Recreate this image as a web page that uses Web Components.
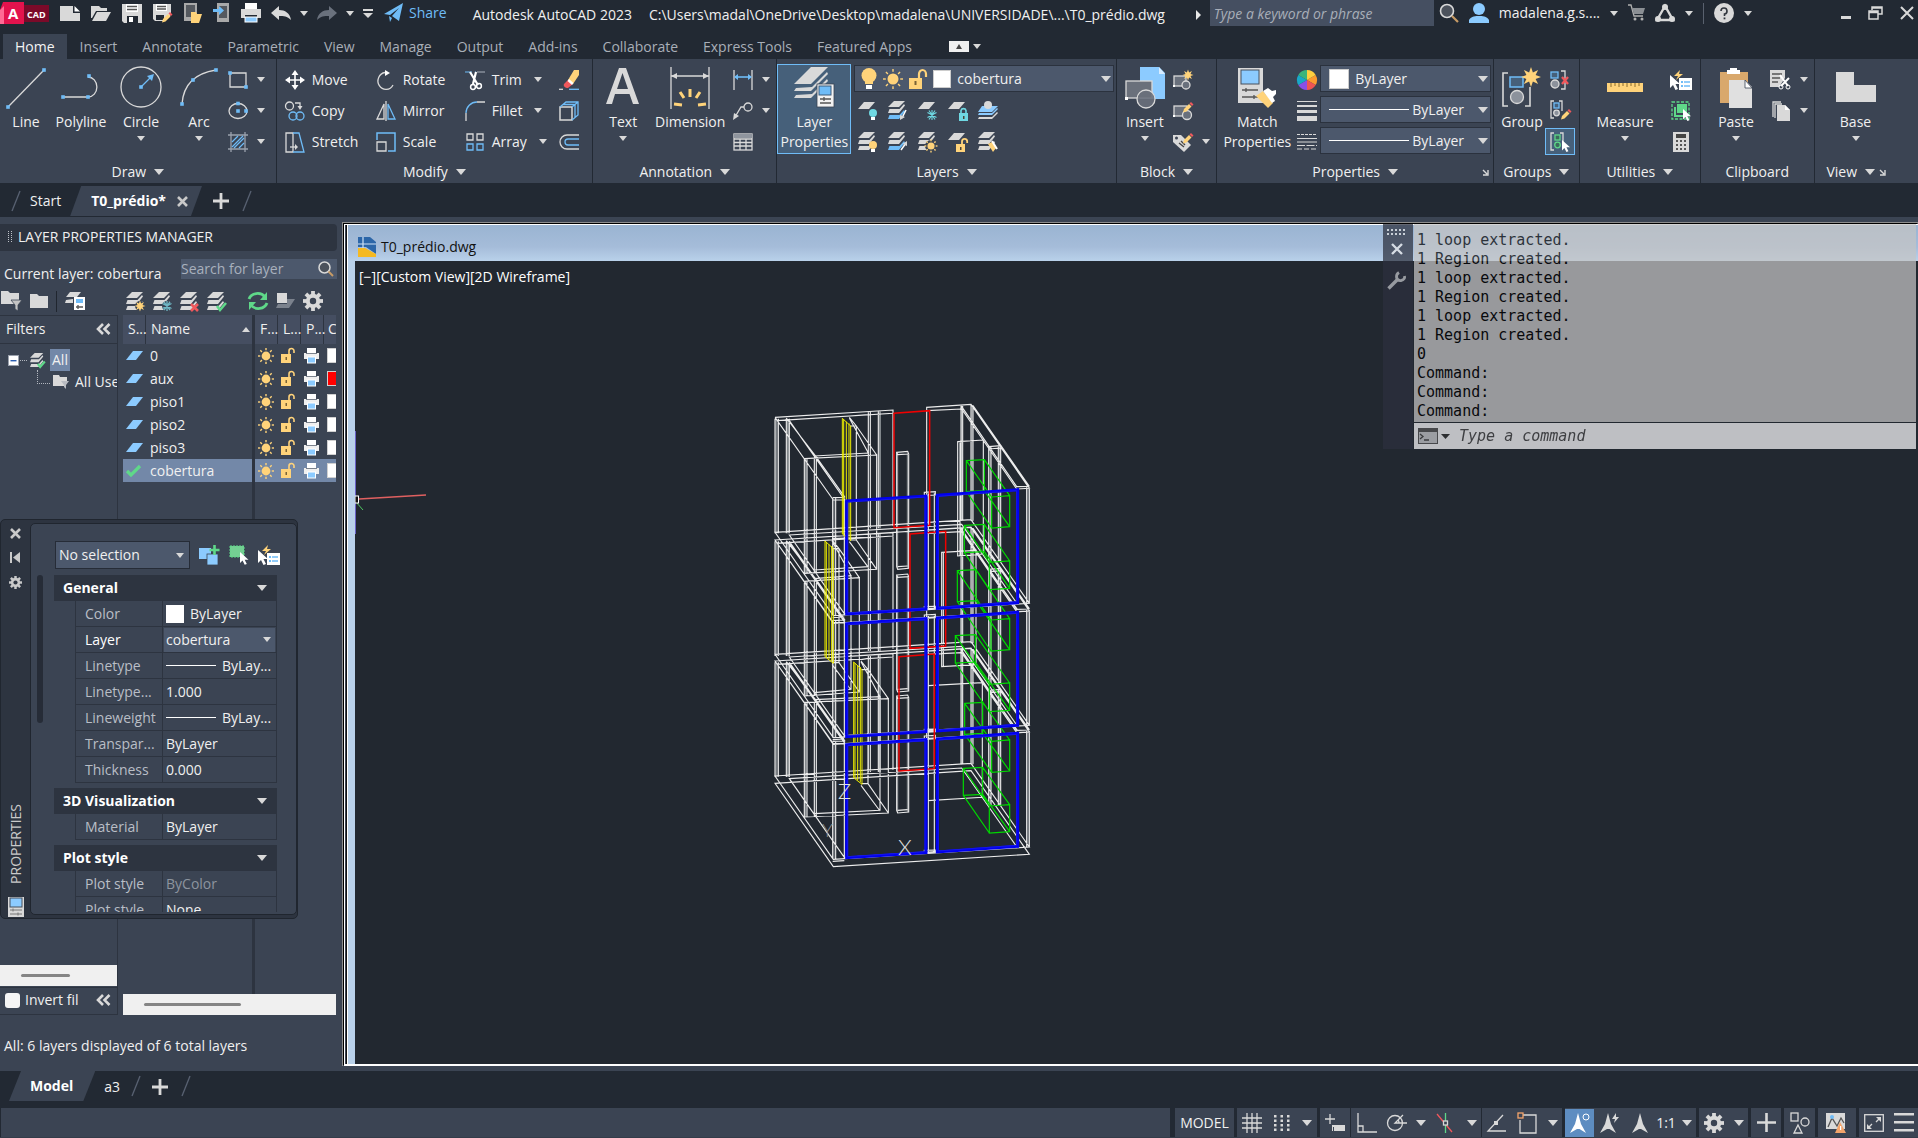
<!DOCTYPE html>
<html lang="en">
<head>
<meta charset="utf-8">
<title>Autodesk AutoCAD 2023</title>
<style>
html,body{margin:0;height:100%;background:#222933;overflow:hidden}
</style>
</head>
<body>
<acad-app></acad-app>
<script>
/* ---------- icon set: name -> [width, height, markup] ---------- */
const W='#d9d9d9',B='#6fbcf7',LB='#8ccbff',Y='#ffd37a',G='#5fd889',R='#f0585c',T='#6fd8e2',D='#3b4453';
const ln=(d,c=W,w=1.3,x='')=>`<path d="${d}" fill="none" stroke="${c}" stroke-width="${w}" ${x}/>`;
const fl=(d,c=W,x='')=>`<path d="${d}" fill="${c}" ${x}/>`;
const rc=(x,y,w,h,c=W,e='')=>`<rect x="${x}" y="${y}" width="${w}" height="${h}" fill="${c}" ${e}/>`;
const ci=(x,y,r,c=W,e='')=>`<circle cx="${x}" cy="${y}" r="${r}" fill="${c}" ${e}/>`;
const st=`stroke="${W}" stroke-width="1.3"`;
const sun=(x,y,r,c=Y)=>{let s=ci(x,y,r*.55,c);for(let i=0;i<8;i++){const a=i*Math.PI/4;s+=ln(`M${x+Math.cos(a)*r*.72} ${y+Math.sin(a)*r*.72}L${x+Math.cos(a)*r} ${y+Math.sin(a)*r}`,c,1.4)}return s};
const star=(x,y,r,c=Y,k=.5)=>{let p='';for(let i=0;i<16;i++){const a=i*Math.PI/8,q=i%2?r*k:r;p+=(i?'L':'M')+(x+Math.sin(a)*q).toFixed(1)+' '+(y-Math.cos(a)*q).toFixed(1)}return fl(p+'z',c)};
const sheet3=(a=W,b=W,c=W)=>fl('M6 0H17L11 6H0z',a)+fl('M1.500 8L0 12H11L17 4.500L16 3L11.500 8z',b)+fl('M1.500 14L0 18H11L17 10.500L16 9L11.500 14z',c);
const cursor=(x,y,s=1)=>`<path transform="translate(${x} ${y}) scale(${s})" d="M0 0V13L3 10L5.500 15L8 14L5.500 9H10z" fill="#fff"/>`;
const pencil=(x,y)=>`<g transform="translate(${x} ${y})">${fl('M1 6L6 1L8.500 3.500L3.500 8.500L0 9.500z',Y)}${fl('M6.500 .500L8 -1L10.500 1.500L9 3z',R)}</g>`;
const gear=(x,y,r,c=W,h=D)=>{let s='';for(let i=0;i<4;i++)s+=`<rect x="${x-r*.19}" y="${y-r}" width="${r*.38}" height="${r*2}" fill="${c}" transform="rotate(${i*45} ${x} ${y})"/>`;return s+ci(x,y,r*.72,c)+ci(x,y,r*.32,h)};
const lock=(x,y,c,open)=>`<g transform="translate(${x} ${y})">${rc(0,5,9,8,c)}${open?ln('M6 5V2.500A2.600 2.600 0 0 1 11.200 2.500V4',c,1.8):ln('M2 5V2.500A2.600 2.600 0 0 1 7 2.500V5',c,1.6)}${rc(4,8,1.5,3,'#4a4436')}</g>`;
const sq=(x,y)=>rc(x-1.8,y-1.8,3.6,3.6,B);
const I={
dn:[8,5,fl('M0 0H8L4 5z')],dns:[10,6,fl('M0 0H10L5 6z')],up:[8,5,fl('M0 5H8L4 0z')],
rt:[6,10,fl('M0 0L5 5L0 10z','#e8e8e8')],
logo:[49,22,fl('M3 0H24V22H4L0 22V8z','#e3134d')+fl('M0 8L4 4V22H0z','#ff6a95')+rc(24,3,25,17,'#7b0a29')],
new:[20,20,fl('M0 3H13V10H20V18H0z')+fl('M14.500 3L20 8.500H14.500z','#fff')],
open:[20,20,fl('M0 3H8L10 5H16V8H5L1 15H0z')+fl('M6 9H20L15 18H1z')],
save:[20,20,fl('M0 1H20V20H2L0 18z')+rc(4,1,12,8,'#fff')+ln('M5 3.500H15M5 6.500H15','#555')+rc(5,13,11,7,'#222933')+rc(7,14,4,5,'#fff')],
saveas:[20,20,fl('M0 1H18V12L10 18H2L0 16z')+rc(3,1,11,7,'#fff')+ln('M4 3.500H13M4 6H13','#555')+rc(3,12,8,5,'#222933')+pencil(9,10)],
mopen:[18,20,fl('M0 0H13V18H0z','#a9a9a9')+rc(2,2,9,12,'#55595f')+fl('M7 9H12L13 11H18L15 20H7z',Y)],
msave:[17,20,rc(4,0,12,19,'#a9a9a9')+rc(6,3,8,12,'#55595f')+fl('M0 6H6V3L11 7.500L6 12V9H0z',B)],
print:[20,20,rc(4,0,12,6,'#fff')+fl('M0 6H20V15H16V12H4V15H0z')+rc(4,14,12,5,LB,'stroke="#fff"')],
undo:[20,14,fl('M0 7L8 0V4C14 4 19 7 20 14C16 10 13 10 8 10V14z')],
redo:[20,14,fl('M20 7L12 0V4C6 4 1 7 0 14C4 10 7 10 12 10V14z','#6a717d')],
qat:[10,9,rc(0,0,10,2)+fl('M0 4H10L5 9z')],
plane:[19,20,fl('M0 11L19 0L15 18L8 13L15 5L6 12z',B)+fl('M5 13L8 15L6 19z',B)],
mag:[20,20,ci(8,8,6.5,'#4c525c',`stroke="${W}" stroke-width="1.600"`)+ln('M13 13L19 19','#c79b66',2.2)],
mags:[16,16,ci(6.5,6.5,5.5,'#4c525c',`stroke="${W}" stroke-width="1.500"`)+ln('M10.500 10.500L15 15','#c79b66',2)],
user:[20,20,ci(10,6,6,LB)+fl('M0 20V17C2 13 7 13 10 13S18 13 20 17V20z',LB)],
cart:[17,18,ln('M0 1H3L6 12H15','#b0b0b0')+fl('M4 4H17L15 10H6z','#8b8f94')+ci(7,15,1.5,'#b0b0b0')+ci(14,15,1.5,'#b0b0b0')],
tri:[20,18,ln('M10 2L2 16H18z',W,2.4)+ci(10,3,3)+ci(3,15,3)+ci(17,15,3)],
help:[20,20,ci(10,10,10)+ln('M7 8A3 3 0 1 1 10.500 11V13','#30353d',1.6)+rc(9.6,14.500,1.8,1.8,'#30353d')],
min:[10,3,rc(0,0,10,3)],
rest:[15,14,ln('M4 4V1H14V8H10M1 5H10V13H1zM4 2H14M1 6.500H10',W,1.5)],
close:[14,14,ln('M1 1L13 13M13 1L1 13',W,2)],
toggle:[20,11,rc(0,0,20,11,'#f0f0f0')+fl('M7 8H13L10 3z','#444')],
line:[40,42,ln('M2 40L38 3')+sq(2,40)+sq(38,3)],
poly:[40,40,ln('M2 30H27A8 9 0 0 0 27 10')+sq(2,30)+sq(27,30)+sq(28,9)],
circle:[42,42,ci(21,20,20,'none',st)+ln('M21 20L30 11',B)+fl('M27 9L34 7L32 14z',B)+sq(21,20)],
arc:[40,40,ln('M3 37Q5 8 37 3')+sq(3,37)+sq(14,13)+sq(37,3)],
rect:[20,18,ln('M2 2H18V16H2z')+sq(2,2)+sq(18,16)],
ell:[20,20,`<ellipse cx="10" cy="10" rx="9" ry="7.500" fill="none" ${st}/>`+sq(10,2.5)+sq(10,10)+sq(18,10)],
hatch:[20,20,ln('M3 0V20M17 0V20M0 3H20M0 17H20','#9aa1ad')+ln('M4 10L10 4M4 15L15 4M6 16L16 6M11 16L16 11',B,1.2)],
move:[20,20,ln('M10 2V18M2 10H18','#fff',1.6)+fl('M10 0L13.500 5H6.500zM10 20L13.500 15H6.500zM0 10L5 6.500V13.500zM20 10L15 6.500V13.500z','#fff')],
copy:[20,20,ci(4.5,5,4,'none',st)+ln('M10 2H15V6')+fl('M12.500 5H17.500L15 9z')+ci(8,15,4,'none',`stroke="${B}" stroke-width="1.300"`)+ci(15,15,4,'none',`stroke="${B}" stroke-width="1.300"`)],
stretch:[20,20,ln('M1 1H8V20H1z')+ln('M8 1H14L19 20H8',B)+ln('M5 15H11')+fl('M10 12L13 15L10 18z')],
rotate:[20,20,ln('M9 2.500A8 8.500 0 1 0 17 15')+fl('M9 0L14 3L9 6z','#fff')],
mirror:[20,20,ln('M1 18L8 3V18z')+ln('M12 3L19 18H12z',B)+ln('M10 0V20')],
scale:[20,20,ln('M1 8V1H19V19H12',B,1.5)+ln('M1 10H10V19H1z')],
trim:[20,20,ln('M0 2H7M10 2H11',B,1.2)+ln('M12 2H20','#9aa1ad',1.2)+ln('M5 2L13 15M11 2L8 14','#fff',2.2)+ci(8,17,2.4,'none','stroke="#fff" stroke-width="1.500"')+ci(14,16,2.4,'none','stroke="#fff" stroke-width="1.500"')],
fillet:[20,20,ln('M1 12A11 11 0 0 1 12 1',B)+ln('M12 1H20M1 20V12')],
array:[18,18,ln('M1 1H7V7H1zM11 1H17V7H11z')+ln('M1 11H7V17H1zM11 11H17V17H11z',B)],
erase:[20,20,fl('M9 10L15 0L20 0V5L14 14z',Y)+fl('M9 10L14 14L9 18C6 18 4 16 5 14z',R)+fl('M8.500 11L13 15L14.500 13L10 9z','#fff')+ln('M0 19.300H4')+ln('M10 19.300H20',B)],
box3:[20,20,ln('M1 6H13V19H1z',W,1.5)+ln('M1 6L7 1H19V14L13 19M13 6L19 1M4 3.500H16V16',B)],
offset:[20,16,ln('M20 1H8A7 7 0 0 0 8 15H20')+ln('M20 5H9A3 3 0 0 0 9 11H20',B)],
bigA:[34,42,fl('M0 37L13 1H20L33 37H27L23.500 27H9L6 37zM11 22H22L16.500 6z')],
dim:[42,42,ln('M2 0V42M40 0V42M2 9H40')+fl('M2 9L8 6V12zM40 9L34 6V12z')+ln('M21 22V30M11 25L15 31M31 25L27 31M5 37L13 38M37 37L29 38',Y,3)],
dims:[20,20,ln('M1 0V20M19 0V20')+ln('M2 7H18',B,1.6)+fl('M1 7L5 4V10zM19 7L15 4V10z',B)],
leader:[20,18,ci(15,5,4,'none',st)+ln('M11 5H8L2 15')+fl('M0 18L1 11L6 14z')],
table:[20,18,rc(1,1,18,16,'none',st)+ln('M1 6H19M1 9.500H19M1 13H19M7 6V17M13 6V17')+rc(1,1,18,4,'#8f959e')],
layers:[40,40,fl('M17 0H34L17 17H0z')+fl('M2 21L0 24H17L34 7L33 5L18 20z')+fl('M2 28L0 31H17L34 14L33 12L18 27z')+rc(23,17,17,23,'#f2f2f2',`stroke="${D}" stroke-width=".800"`)+rc(25,19,12,9,B,'stroke="#3d5a78"')+ln('M26 32H37M26 36H37M30 30V34','#555',1.3)],
bulb:[16,22,ci(8,7.5,7.5,Y)+rc(4,12,8,4,Y)+rc(5,17,6,4,'#fff')],
sun:[20,20,sun(10,10,10)],
unlock:[18,20,rc(0,9,13,11,Y)+ln('M10 9V5A3.500 4 0 0 1 17 5V8',Y,2.2)+rc(5.5,12,2,4,'#7a6335')],
l1:[20,20,fl('M6 1H17L11 8H0z')+ci(15,12,4,T)+rc(13,16,4,3,'#fff')],
l2:[20,20,sheet3(W,W,B)+ln('M18 9L14 17','#fff',1.5)+fl('M12 19L12 14L17 16z')],
l3:[20,20,fl('M6 1H17L11 8H0z')+ln('M14 9V19M9.500 11.500L18.500 16.500M18.500 11.500L9.500 16.500M11 9.500L17 18.500M17 9.500L11 18.500',T,1.1)],
l4:[20,20,fl('M6 1H17L11 8H0z')+lock(11,7,T,0)],
l5:[20,20,fl('M4 5H20L14 11H0z',LB)+fl('M1 12L0 14H14L20 8L19 7L14 12z',LB)+fl('M1 16L0 18H14L20 12L19 11L14 16z')+ci(10,4,4)],
l6:[20,20,sheet3()+ci(15,13,4,Y)+rc(13,17,4,3,'#fff')],
l7:[20,20,sheet3(W,W,B)+ln('M13 18L18 11','#fff',1.5)+fl('M19 9V14L14.500 12z')],
l8:[20,20,sheet3()+ci(13,14,6,D)+sun(13,14,6.5)],
l9:[20,20,fl('M6 1H17L11 8H0z')+lock(8,7,Y,1)],
l10:[20,20,sheet3()+fl('M10 12L14 10L18 16L15 20z',Y)+ln('M14 9L19 17','#fff',2)],
insert:[40,42,fl('M15 0H34L40 6V32H15z',LB)+fl('M34 0V7H40z','#d7ecff')+rc(1,14,26,17,'#6a707b',st)+ci(21,32,9,'#6a707b',`fill-opacity=".900" ${st}`)+rc(0,30,3,3,'#fff')],
b1:[20,20,rc(1,6,12,10,'#69707c',st)+ci(13,15,4,'#69707c',st)+star(15,5,5.5)+rc(0,15,2,2,'#fff')],
b2:[20,20,rc(1,5,13,10,'#69707c',st)+ci(14,14,4.5,'#69707c',st)+pencil(10,2)+rc(0,14,2,2,'#fff')],
b3:[20,20,fl('M0 3L8 3L18 13L11 20L0 10z')+ci(3.5,6,1.5,D)+ln('M6 11L11 15M8 9L12 13','#444')+pencil(10,2)],
match:[40,42,rc(1,1,25,35)+rc(4,3,18,14,LB,'stroke="#48505c"')+ln('M5 23H21M5 30H21M9 21V25M17 28V32','#555')+fl('M19 29L26 24L36 36L31 41z',Y)+fl('M26 24L31 21L35 24L39 23L39 27L36 30L38 34L35 36z','#fff')],
wheel:[20,20,['#fd9b2f','#ef5454','#8a4fe8','#18a8c8','#3bb57b','#ffcf3f'].map((c,i)=>{const a=(i*60-30)*Math.PI/180,b=a+Math.PI/3;return fl(`M10 10L${10+10*Math.cos(a)} ${10+10*Math.sin(a)}A10 10 0 0 1 ${10+10*Math.cos(b)} ${10+10*Math.sin(b)}z`,c)}).join('')],
lw:[20,20,rc(0,0,20,1)+rc(0,4,20,2)+rc(0,9,20,3)+rc(0,15,20,5)],
lt:[20,18,ln('M0 1.500H20',W,1,'stroke-dasharray="3 1"')+ln('M0 5.500H20M0 9H20',W,1)+ln('M0 12.500H20',W,1,'stroke-dasharray="8 1.500"')+ln('M0 16H20',W,1,'stroke-dasharray="5 2"')],
group:[40,40,ln('M6 6H1V39H6',W,1.6)+ln('M23 39H28V20',W,1.6)+rc(8,10,13,10,'#46607a',`stroke="${B}" stroke-width="1.500"`)+ci(15,30,6.5,'#8c929c',st)+star(29,10,10)],
g1:[20,20,rc(1,2,7,6,'#46607a',`stroke="${B}" stroke-width="1.300"`)+ci(5,14,4,'#8c929c',st)+ln('M11 1H15V19H11')+ln('M12 7L18 14M18 7L12 14',R,2.4)],
g2:[20,20,rc(4,2,5,5,'#46607a',`stroke="${B}" stroke-width="1.300"`)+ci(6.5,12,2.8,'#8c929c',st)+ln('M4 0H1V17H4M9 0H12V10')+pencil(11,9)],
g3:[20,20,rc(5,3,5,5,'#3b6b5d',`stroke="${G}" stroke-width="1.300"`)+ci(7.500,13,2.8,'#3b6b5d',`stroke="${G}" stroke-width="1.300"`)+ln('M4 1H1V18H4M10 1H13V10')+cursor(12,8,.8)],
ruler:[36,40,rc(0,16,36,9,Y)+ln('M4 16V20M8 16V19M12 16V20M16 16V19M20 16V20M24 16V19M28 16V20M32 16V19','#8a6d2d',1)],
u1:[22,20,cursor(0,5,1)+fl('M10 0L4 6H8L6 10L13 4H9z',Y)+rc(9,8,13,12,'#fff')+rc(11,11,2,2,B)+rc(11,15,2,2,B)+ln('M14 12H20M14 16H20',B)],
u2:[20,20,ln('M1 1H18V18H1z',G,1.3,'stroke-dasharray="3 1.500"')+rc(6,3,10,9,G)+ln('M4 6V15H12',G,2)+cursor(12,8,.8)],
calc:[16,20,rc(0,0,16,20)+rc(3,2,10,4,'#444')+[3,7,11].map(x=>[8,12,16].map(y=>rc(x,y,2,2,'#555')).join('')).join('')],
paste:[34,42,rc(1,5,28,31,'#d9a86c')+rc(8,3,13,4,'#fff')+rc(11,1,7,4,'#fff')+fl('M10 13H26L33 20V41H10z','#e0e0e0')+fl('M26 13V21H33z','#fff','stroke="#3b4453" stroke-width=".800"')],
cut:[22,20,fl('M0 0H15V8L9 17H0z')+ln('M2 4H12M2 8H10M2 12H8','#555')+ln('M10 5L18 16M19 8L11 16','#fff',2)+ci(11,17,2,'none','stroke="#fff"')+ci(18,17,2,'none','stroke="#fff"')],
cp:[18,20,ln('M1 16V1H9')+ln('M3 17V3H10')+fl('M5 4H13L18 9V20H5z')+fl('M13 4V9H18z','#fff')],
base:[40,40,fl('M0 5H18V18H40V35H0z')],
launch:[7,7,ln('M1 1L5 5M6 1V6H1',W,1.4)],
x:[11,11,ln('M1 1L10 10M10 1L1 10','#c9c9c9',2.6)],
plus:[16,16,ln('M8 0V16M0 8H16',W,2.8)],
slash:[10,20,ln('M9 0L1 20','#596273',1.3)],
grip:[4,11,[0,3].map(x=>[0,2,4,6,8,10].map(y=>rc(x,y,1,1,'#c0c4ca')).join('')).join('')],
ff:[21,20,fl('M0 0H7L9 2H18V9L16 13H0z')+fl('M10 9H21L17 14V20L14 18V14z','#c4c4c4',`stroke="${D}" stroke-width=".800"`)],
fof:[16,14,fl('M0 0H6L7 2H14V7L12 11H0z')+fl('M8 6H16L13 10V14L11 12V10z','#b9bcc2')],
fo:[18,16,fl('M0 1H7L9 3H18V15H0z')],
fs:[20,20,fl('M5 1H16L12 6H1z')+fl('M1 9L0 12H8V8z')+rc(9,6,11,13,'#fff')+rc(11,8,7,4,B)+ln('M11 16H18M13 14V18','#555')],
n1:[19,19,sheet3()+ci(14,14,5,D)+star(14,14,5.5)],
n2:[19,19,sheet3()+ci(14,14,5,D)+ln('M14 9V19M9.500 11.500L18.500 16.500M18.500 11.500L9.500 16.500M11 10L17 18M17 10L11 18','#6fb6c4',1.3)],
n3:[19,19,sheet3()+ln('M11 12L18 19M18 12L11 19',R,2.6)],
n4:[19,19,sheet3()+ln('M10 14L13 18L19 11',G,2.6)],
n4s:[15,15,`<g transform="scale(.78)">${sheet3()+ln('M10 14L13 18L19 11',G,2.8)}</g>`],
refresh:[20,18,ln('M1 7A9 8 0 0 1 17 5M19 11A9 8 0 0 1 3 13',G,2.8)+fl('M19 0V8H12z',G)+fl('M1 18V10H8z',G)],
iso:[19,16,rc(1,0,10,10)+fl('M11 6H19L13 15H0L2 11H11z','#7b828d')],
gear:[20,20,gear(10,10,10)],gears:[13,13,gear(6.5,6.5,6.5,'#c9c9c9','#2d3440')],
chev:[15,12,ln('M7 1L2 6L7 11M13.500 1L8.500 6L13.500 11',W,2.6)],
minus:[11,11,rc(.5,.5,10,10,'#fff','stroke="#9aa1ad"')+rc(2.5,5,6,1.4,'#2a5db0')],
state:[17,9,fl('M7 0H17L10 9H0z',LB)],
check:[15,12,ln('M1 6L5 10L14 1',G,3.2)],
sunr:[16,16,sun(8,8,8)],
unl:[14,15,rc(0,6,10,9,Y)+ln('M8 6V3A2.500 2.500 0 0 1 13 3V5',Y,1.6)+rc(4.500,9,1.5,3,'#7a6335')],
pr:[15,15,rc(3,0,9,5,'#fff')+fl('M0 5H15V11H12V9H3V11H0z','#f0f0f0')+ln('M2 5.500H13','#7b828d',1)+rc(3.5,9,8,6,LB,'stroke="#fff"')],
pin:[11,11,rc(0,0,2,11,'#c9c9c9')+fl('M3 5.500L10 0V11z','#c9c9c9')],
prop:[16,20,rc(0,0,16,20)+rc(2,1,12,9,LB,'stroke="#48505c"')+ln('M2 13H14M2 17H14M5 11.500V14.500M10 15.500V18.500','#777',1)],
p1:[21,20,rc(0,3,12,11,LB)+rc(8,9,11,11,LB,`stroke="${D}" stroke-width=".800"`)+ln('M15.500 0V10M10.500 5H20.500',G,2.6)],
p2:[20,20,rc(1,1,14,11,'#74cf93',`stroke="${G}" stroke-dasharray="2 1"`)+cursor(11,7,.85)],
dwg:[18,20,fl('M0 0H12L18 5V17L8 10H0z','#2c66a8')+ln('M5 0V13M0 7H18','#cfe2f5',1.2)+fl('M0 11H7L18 17V20H0z','#f5b921')],
grid6:[20,6,[0,4,8,12,16].map(x=>rc(x,0,2,2)+rc(x,4,2,2)).join('')],
wrench:[19,19,ln('M1.500 17.500L11 8','#c3c6ca',3.4)+ln('M12 1.500C8 4 9 10 14 9.500C17 9 18 7 17.500 5','#c3c6ca',2.8)],
cx:[12,12,ln('M1 1L11 11M11 1L1 11','#e6e6e6',2.4)],
cmd:[20,16,rc(.5,.5,19,15,'#c9cacc','stroke="#555"')+rc(0,0,20,4,'#555')+ln('M2 6L5 8.500L2 11M6 12H11','#444')],
dk:[9,5,fl('M0 0H9L4.500 5z','#333')],
sgrid:[20,20,ln('M5 0V20M10 0V20M15 0V20M0 5H20M0 10H20M0 15H20',W,1.3)],
ssnap:[16,16,[0,6.5,13].map(x=>[0,4.500,9,13.5].map(y=>rc(x,y,2.5,2.5)).join('')).join('')],
sdyn:[20,18,ln('M5 0V10M0 5H10')+rc(7,11,13,6)+rc(8,13,1,4,D)],
sortho:[20,20,ln('M1 0V19H20M1 13H6V19')],
spolar:[20,18,ci(8,9,7.5,'none',st)+ln('M20 9H8L16 1M12 9A4 4 0 0 0 11 6')],
siso:[18,20,ln('M0 1L15 19',R)+ln('M8.500 0V20',G)+rc(6.5,8,4,4,'#39434f',st)],
strk:[20,18,ln('M19 17H1L16 1')+rc(7,7,4,4,W)],
sosn:[20,22,ln('M6 3H19V21H3V8')+rc(1,1,5,5,'none','stroke="#f5a56b" stroke-width="1.300"')],
sa1:[20,22,fl('M8 1L11 12L16 21L9.500 17H7L0 21L5 12z','#fff')+ci(16,5,3,'none','stroke="#fff"')],
sa2:[20,22,fl('M8 1L11 12L16 21L9.500 17H7L0 21L5 12z')+fl('M16 1L12 7H15L14 11L19 5H16z')],
sa3:[18,22,fl('M9 1L12 12L17 21L10 17H8L1 21L6 12z')],
scust:[19,19,ln('M9.500 0V19M0 9.500H19',W,2.6)],
sshape:[20,22,rc(1,1,7,8,'none',st)+ci(15,10,4,'none',st)+ln('M8 13L12 21H4z')],
sperf:[22,22,rc(0,1,19,16)+ln('M2 15L6 6L11 14L15 6L18 11','#555')+ci(6,5,2,B)+fl('M14 10L20 21H9z','#f3a46b')+rc(14,14,1.2,4,'#fff')],
sfull:[20,18,rc(.7,.7,18.600,16.600,'none',st)+ln('M4 14L8 10M16 4L12 8')+fl('M3 10V15H8zM12 3H17V8z')],
sham:[20,20,rc(0,0,20,2.5)+rc(0,8,20,2.5)+rc(0,16,20,2.5)]
};

/* ---------- shared element base ---------- */
const BASE=`*{box-sizing:border-box}
:host{display:block;font:14px/20px "Open Sans","Noto Sans",sans-serif;color:#f0f0f0}
button,input,select{font:inherit;color:inherit;background:none;border:0;margin:0;padding:0;outline:0;border-radius:0}
button{display:flex;align-items:center;white-space:nowrap}
select{appearance:none;min-width:0}
select option{background:#3b4453}`;
function define(tag,css,html,init){
  const t=document.createElement('template');
  t.innerHTML=`<style>${BASE}${css}</style>`+html;
  customElements.define(tag,class extends HTMLElement{
    constructor(){super();this.attachShadow({mode:'open'}).append(t.content.cloneNode(true));}
    connectedCallback(){if(init&&!this.done){this.done=true;init(this,this.shadowRoot);}}
  });
}
const ic=n=>`<ac-icon name="${n}"></ac-icon>`;
const ib=(n,l)=>`<button aria-label="${l||n}">${ic(n)}</button>`;

define('ac-icon',':host{flex:none}svg{display:block;overflow:visible}','',(h,s)=>{
  const [w,ht,m]=I[h.getAttribute('name')];
  s.innerHTML+=`<svg width="${w}" height="${ht}" viewBox="0 0 ${w} ${ht}" aria-hidden="true">${m}</svg>`;
});

define('title-bar',`
:host{height:34px}
header{display:flex;align-items:flex-start;height:27px;white-space:nowrap}
.g{display:flex;align-items:center;height:26px}
.logo{position:relative}
.logo span{position:absolute;color:#fff;font-weight:700;line-height:20px}
.logo .a{left:8px;top:3px;font-size:15px}.logo .c{left:27px;top:5px;font-size:9px}
.qat{gap:11px;padding-left:11px}
.un{gap:9px;padding-left:10px}
.share{color:${B};gap:6px;font-size:14px;padding-left:2px}
.t{flex:1;gap:17px;padding:3px 8px 0 26px}
.t ac-icon{margin-left:auto}
input{width:224px;height:26px;background:#454f61;padding:0 4px;font-style:italic}
input::placeholder{color:#a8aeb8;opacity:1}
.r{gap:10px;padding-left:5px}
.sep{width:1px;height:21px;background:#59616e}
.w{gap:17px;padding:0 4px 0 89px}
.w button:first-child{padding-top:8px}`,
`<header><div class="g logo">${ic('logo')}<span class="a">A</span><span class="c">CAD</span></div>
<div class="g qat">${['new','open','save','saveas','mopen','msave','print'].map(n=>ib(n)).join('')}</div>
<div class="g un">${ib('undo')}${ic('dn')}${ib('redo')}${ic('dn')}${ib('qat','Customize')}<button class="share">${ic('plane')}Share</button></div>
<div class="g t"><span>Autodesk AutoCAD 2023</span><span>C:\\Users\\madal\\OneDrive\\Desktop\\madalena\\UNIVERSIDADE\\...\\T0_prédio.dwg</span>${ic('rt')}</div>
<input type="text" aria-label="Search" placeholder="Type a keyword or phrase">
<div class="g r">${ib('mag','Search')}${ib('user','Account')}<span>madalena.g.s....</span>${ic('dn')}${ib('cart')}${ib('tri','Apps')}${ic('dn')}<i class="sep"></i>${ib('help')}${ic('dn')}</div>
<div class="g w">${ib('min','Minimize')}${ib('rest','Restore')}${ib('close')}</div></header>`);

define('ribbon-tabs',`
nav{display:flex;gap:1px;height:25px;padding-left:3px;align-items:center}
button{height:25px;padding:0 12px;color:#a9afb8}
button[aria-selected=true]{background:#3b4453;color:#f4f4f4}
.tg{display:flex;gap:4px;align-items:center;padding-left:24px}`,
`<nav role="tablist">${['Home','Insert','Annotate','Parametric','View','Manage','Output','Add-ins','Collaborate','Express Tools','Featured Apps'].map((t,i)=>`<button role="tab" aria-selected="${!i}">${t}</button>`).join('')}<span class="tg">${ic('toggle')}${ic('dn')}</span></nav>`);

define('ribbon-panel',`
:host{display:flex;flex-direction:column;min-width:0;border-right:1px solid #222933}
:host(:last-child){border-right:0}
.body{display:flex;height:98px;padding-top:5px}
footer{display:flex;justify-content:center;align-items:center;gap:8px;height:26px;padding-top:4px;position:relative}
.l{position:absolute;right:4px;top:12px}
:host([short]) footer{margin-right:31px}
:host([short]) .l{right:1px}`,
`<div class="body"><slot></slot></div><footer><span></span></footer>`,(h,s)=>{
  s.querySelector('span').textContent=h.getAttribute('name');
  const f=s.querySelector('footer');
  if(!h.hasAttribute('plain'))f.insertAdjacentHTML('beforeend',ic('dns'));
  if(h.hasAttribute('launch'))f.insertAdjacentHTML('beforeend',`<span class="l">${ic('launch')}</span>`);
});

define('ribbon-large',`
:host{flex:none}
button{flex-direction:column;width:100%;height:90px;padding-top:3px;white-space:normal;line-height:20px}
.i{display:flex;align-items:flex-start;justify-content:center;height:40px;margin-bottom:5px}
.a{margin-top:4px}
:host([active]) button{background:#46607a;border:1px solid ${B};padding-top:2px}`,
`<button><span class="i"></span><slot></slot></button>`,(h,s)=>{
  s.querySelector('.i').innerHTML=ic(h.getAttribute('icon'));
  if(h.hasAttribute('arrow'))s.querySelector('button').insertAdjacentHTML('beforeend',`<span class="a">${ic('dn')}</span>`);
});

define('ribbon-small',`
button{height:31px;gap:7px}
.i{display:flex;width:20px;justify-content:center}
.a{padding-left:var(--arrow-gap,2px)}
:host([active]) button{border:1px solid ${B};background:#46607a;height:27px;margin:2px 0 2px -5px;padding:0 4px}`,
`<button><span class="i"></span><slot></slot></button>`,(h,s)=>{
  s.querySelector('.i').innerHTML=ic(h.getAttribute('icon'));
  if(!h.textContent)s.querySelector('button').setAttribute('aria-label',h.getAttribute('icon'));
  if(h.hasAttribute('arrow'))s.querySelector('button').insertAdjacentHTML('beforeend',`<span class="a">${ic('dn')}</span>`);
});

define('combo-box',`
:host{min-width:0}
label{display:flex;align-items:center;gap:6px;height:27px;background:#4c586c;border:1px solid #2b323e;padding:0 2px 0 8px}
select{flex:1;height:25px}
.sw{width:20px;height:20px;background:#fff;border:1px solid #ccc;flex:none}
.ln{width:80px;height:1px;background:#fff;margin:0 -3px 0 0;flex:none}`,
`<label><slot></slot><select></select>${ic('dns')}</label>`,(h,s)=>{
  const sel=s.querySelector('select'),v=h.getAttribute('value');
  sel.innerHTML=`<option>${v}</option>`;sel.setAttribute('aria-label',h.getAttribute('label'));
  const k=h.getAttribute('kind');
  if(k)s.querySelector('slot').outerHTML=`<span class="${k}"></span>`;
});

const sm=(i,t='',a='')=>`<ribbon-small icon="${i}" ${a}>${t}</ribbon-small>`;
const lg=(w,i,t,a='')=>`<ribbon-large style="width:${w}px" icon="${i}" ${a}>${t}</ribbon-large>`;
define('ribbon-bar',`
:host{background:#3b4453}
.bar{display:flex;height:124px}
.c{flex:none}
.m{--arrow-gap:5px}
.row{display:flex;gap:10px;padding-left:4px}
.stack{flex:1;min-width:0;padding:1px 2px 0 3px}
.stack .row:nth-child(2){margin-top:3px}
.stack combo-box+combo-box{margin-top:4px}
.lay{display:flex;gap:6px;align-items:center;margin-left:-2px}
.lay i{width:18px;height:18px;background:#fff;border:1px solid #ccc}`,
`<div class="bar">
<ribbon-panel name="Draw" style="flex:277 1 0">${lg(52,'line','Line')}${lg(58,'poly','Polyline')}${lg(62,'circle','Circle','arrow')}${lg(54,'arc','Arc','arrow')}<div class="c" style="margin-left:2px">${sm('rect','','arrow')}${sm('ell','','arrow')}${sm('hatch','','arrow')}</div></ribbon-panel>
<ribbon-panel name="Modify" style="flex:317 1 0"><div class="c" style="width:91px;margin-left:8px">${sm('move','Move')}${sm('copy','Copy')}${sm('stretch','Stretch')}</div><div class="c" style="width:89px">${sm('rotate','Rotate')}${sm('mirror','Mirror')}${sm('scale','Scale')}</div><div class="c m" style="width:94px">${sm('trim','Trim','arrow')}${sm('fillet','Fillet','arrow')}${sm('array','Array','arrow')}</div><div class="c">${sm('erase')}${sm('box3')}${sm('offset')}</div></ribbon-panel>
<ribbon-panel name="Annotation" style="flex:184 1 0">${lg(60,'bigA','Text','arrow')}${lg(74,'dim','Dimension')}<div class="c" style="margin-left:6px">${sm('dims','','arrow')}${sm('leader','','arrow')}${sm('table')}</div></ribbon-panel>
<ribbon-panel name="Layers" style="flex:340 1 0">${lg(74,'layers','Layer<br>Properties','active style="margin-left:2px;width:74px"')}<div class="stack"><combo-box label="Layer" value="cobertura"><span class="lay">${ic('bulb')}${ic('sun')}${ic('unlock')}<i></i></span></combo-box><div class="row">${['l1','l2','l3','l4','l5'].map(n=>sm(n)).join('')}</div><div class="row">${['l6','l7','l8','l9','l10'].map(n=>sm(n)).join('')}</div></div></ribbon-panel>
<ribbon-panel name="Block" style="flex:100 1 0">${lg(56,'insert','Insert','arrow')}<div class="c">${sm('b1')}${sm('b2')}${sm('b3','','arrow')}</div></ribbon-panel>
<ribbon-panel name="Properties" launch style="flex:277 1 0">${lg(80,'match','Match<br>Properties')}<div class="c">${sm('wheel')}${sm('lw')}${sm('lt')}</div><div class="stack"><combo-box kind="sw" label="Color" value="ByLayer"></combo-box><combo-box kind="ln" label="Lineweight" value="ByLayer"></combo-box><combo-box kind="ln" label="Linetype" value="ByLayer"></combo-box></div></ribbon-panel>
<ribbon-panel name="Groups" style="flex:85 1 0">${lg(56,'group','Group')}<div class="c">${sm('g1')}${sm('g2')}${sm('g3','','active')}</div></ribbon-panel>
<ribbon-panel name="Utilities" style="flex:121 1 0">${lg(91,'ruler','Measure','arrow')}<div class="c">${sm('u1')}${sm('u2')}${sm('calc')}</div></ribbon-panel>
<ribbon-panel name="Clipboard" plain style="flex:113 1 0">${lg(70,'paste','Paste','arrow')}<div class="c">${sm('cut','','arrow')}${sm('cp','','arrow')}</div></ribbon-panel>
<ribbon-panel name="View" launch short style="flex:104 1 0">${lg(82,'base','Base','arrow')}</ribbon-panel>
</div>`);

define('file-tabs',`
nav{display:flex;align-items:center;height:33px;padding-left:11px}
nav>ac-icon{margin-top:2px}
.on{font-weight:700;color:#fff;background:#3b4453;height:30px;margin-top:3px;padding:0 14px 0 21px;gap:11px;clip-path:polygon(11px 0,100% 0,calc(100% - 11px) 100%,0 100%)}
.s{padding:2px 9px 0 9px}.p{padding:2px 13px 0 11px}`,
`<nav>${ic('slash')}<button class="s">Start</button><button class="on">T0_prédio*${ic('x')}</button><button class="p" aria-label="New tab">${ic('plus')}</button>${ic('slash')}</nav>`);
define('layout-tabs',`
nav{display:flex;align-items:flex-start;height:37px;padding-left:9px}
button{height:32px}
.on{font-weight:700;color:#fff;background:#3b4453;height:30px;padding:0 22px 0 21px;clip-path:polygon(12px 0,100% 0,calc(100% - 12px) 100%,0 100%)}
.s{padding:0 11px 0 9px}.p{padding:0 13px 0 11px}ac-icon{margin-top:5px}.p ac-icon{margin:0}`,
`<nav><button class="on">Model</button><button class="s">a3</button>${ic('slash')}<button class="p" aria-label="New layout">${ic('plus')}</button>${ic('slash')}</nav>`);

define('layer-manager',`
:host{display:flex;flex-direction:column;width:337px;flex:none;padding-top:7px;position:relative}
h2{display:flex;align-items:center;gap:6px;margin:0;height:27px;padding:0 0 2px 8px;background:#2d3440;font:inherit;border-radius:0 4px 4px 0}
.cur{display:flex;justify-content:space-between;height:36px;padding:8px 0 0 4px;white-space:nowrap}
.cur span{padding-top:5px}
.cur label{display:flex;width:156px;height:20px;background:#4c586c;align-items:center;padding-right:3px}
.cur input{flex:1;min-width:0}.cur input::placeholder{color:#a8b0bd;opacity:1}
.tools{display:flex;align-items:center;height:28px}
.tools div{display:flex;align-items:center;gap:8px}
.tools .a{width:126px;padding-left:1px;gap:8px}
.tools i{width:1px;height:21px;background:#20262f}
.main{display:flex;flex:1;min-height:0}
.filters{width:118px;flex:none;display:flex;flex-direction:column;border-right:1px solid #2d3440;overflow:hidden}
.fh,.inv{display:flex;align-items:center;justify-content:space-between;padding:0 6px 2px 6px;height:29px;border:solid #2d3440;border-width:1px 0}
.fh{flex:none}
.tree{flex:1;padding:5px 0 0 8px;white-space:nowrap}
.tree div{display:flex;align-items:center;height:22px;gap:6px}
.tree b{font-weight:400;background:#7388a8;padding:0 2px;height:22px;line-height:22px;margin-left:-1px}
.tree .k{padding-left:29px}
.tree .k::before{content:"";width:12px;height:13px;margin:-10px -3px 0 0;border:dotted #b0b5bd;border-width:0 0 1px 1px;flex:none}
.tree u{width:7px;border-top:1px dotted #b0b5bd;margin:0 -3px 0 -5px}
.sb{height:21px;background:#f0f0f0;display:flex;align-items:center;padding-left:21px;flex:none}
.sb i{width:49px;height:3px;background:#858585;border-radius:2px}
.inv{height:28px;padding:0 6px 2px 5px;margin-top:1px;flex:none}
.inv label{display:flex;gap:5px;align-items:center;white-space:nowrap}
input[type=checkbox]{appearance:none;width:15px;height:15px;background:#f5f5f5;border-radius:3px}
.list{flex:1;min-width:0;margin:0 1px 0 5px;display:flex;flex-direction:column;overflow:hidden}
.list .sb i{width:97px}
.tw{flex:1;overflow:hidden;background:linear-gradient(#2d3440,#2d3440) 129px 0/3px 100% no-repeat}
table{border-collapse:separate;border-spacing:0;table-layout:fixed;width:213px}
th{height:29px;background:#454e61;font-weight:400;text-align:left;padding:0 0 1px 5px;border-right:1px solid #2d3440;white-space:nowrap}
th:last-child{padding-left:4px;border:0}
td{height:23px;padding:0 0 0 4px;line-height:22px}
th:nth-child(2),td:nth-child(2){border-right:3px solid #2d3440}
th span{display:flex;justify-content:space-between;align-items:center;padding-right:2px}
.sel td{background:#7388a8}
td ac-icon{display:block}
td:nth-child(n+3){padding-left:3px}
td:first-child{padding-left:3px}
td i{display:block;width:15px;height:15px;background:#fff;border:1px solid #d0d0d0}
.red i{background:#f00}
.foot{height:56px;padding:21px 4px 0}`,
`<h2>${ic('grip')}LAYER PROPERTIES MANAGER</h2>
<div class="cur"><span>Current layer: cobertura</span><label><input aria-label="Search for layer" placeholder="Search for layer">${ic('mags')}</label></div>
<div class="tools"><div class="a">${ib('ff','New filter')}${ib('fo','New group')}<i></i>${ib('fs','States')}</div><div>${ib('n1','New layer')}${ib('n2','New frozen layer')}${ib('n3','Delete layer')}${ib('n4','Set current')}</div><div style="margin-left:22px">${ib('refresh')}${ib('iso')}${ib('gear','Settings')}</div></div>
<div class="main"><div class="filters"><div class="fh"><span>Filters</span>${ic('chev')}</div>
<div class="tree"><div>${ic('minus')}<u></u>${ic('n4s')}<b>All</b></div><div class="k">${ic('fof')}All Use</div></div>
<div class="sb"><i></i></div><div class="inv"><label><input type="checkbox">Invert fil</label>${ic('chev')}</div></div>
<div class="list"><div class="tw"><table><colgroup><col style="width:23px"><col style="width:109px"><col style="width:23px"><col style="width:23px"><col style="width:23px"><col></colgroup>
<thead><tr><th>S...</th><th><span>Name ${ic('up')}</span></th><th>F...</th><th>L...</th><th>P...</th><th>C</th></tr></thead><tbody></tbody></table></div><div class="sb"><i></i></div></div></div>
<div class="foot">All: 6 layers displayed of 6 total layers</div>`,(h,s)=>{
  s.querySelector('tbody').innerHTML=['0','aux','piso1','piso2','piso3','cobertura'].map((n,i)=>
   `<tr class="${i==5?'sel':''}"><td>${ic(i==5?'check':'state')}</td><td>${n}</td><td>${ic('sunr')}</td><td>${ic('unl')}</td><td>${ic('pr')}</td><td class="${i==1?'red':''}"><i></i></td></tr>`).join('');
});

define('properties-palette',`
:host{position:absolute;left:0;top:302px;width:298px;height:400px;background:#2d3440;border:1px solid #20262f;border-radius:5px;display:flex;z-index:2}
.side{width:29px;display:flex;flex-direction:column;align-items:center;padding:8px 0 1px;gap:13px;flex:none}
.side span{writing-mode:vertical-rl;transform:rotate(180deg);margin-top:auto;color:#c9c9c9;line-height:20px}
.in{flex:1;display:flex;margin:3px 3px 3px 0;background:#3b4453;border:1px solid #20262f;border-radius:5px}
.th{width:6px;height:148px;background:#262c37;border-radius:3px;margin:51px 11px 0 6px;flex:none}
.c{flex:1;padding:17px 16px 0 0;height:388px;overflow:hidden}
.top{display:flex;gap:9px;align-items:center;padding-left:1px;height:28px;margin-bottom:6px}
.top label{display:flex;width:135px;height:28px;align-items:center;background:#4c586c;border:1px solid #262c37;padding:0 5px 0 3px}
select{flex:1;height:24px}
h3{display:flex;justify-content:space-between;align-items:center;margin:0;height:26px;width:223px;background:#2d3440;font:inherit;font-weight:700;padding:0 10px 0 9px;color:#fff}
table{border-spacing:0;table-layout:fixed;width:202px;margin:0 0 5px 21px;border-left:1px solid #2d3440}
th,td{height:26px;padding:0 4px;border:solid #2d3440;border-width:0 1px 1px 0;text-align:left;font-weight:400;white-space:nowrap}
th{color:#b9bec6;padding:0 2px 0 9px}
th:first-child{width:87px}
td{padding-left:3px}
td div{display:flex;align-items:center;gap:6px}
td i{width:50px;height:1px;background:#fff}
td i.q{width:18px;height:18px}
td .d{background:#4c586c;margin:0 -3px 0 -2px;height:24px;padding:0 4px 0 2px}
.hl{color:#fff}.off{color:#8d949f}`,
`<div class="side">${ic('x')}${ic('pin')}${ic('gears')}<span>PROPERTIES</span>${ic('prop')}</div>
<div class="in"><div class="th"></div><div class="c"><div class="top"><label><select aria-label="Selection"><option>No selection</option></select>${ic('dn')}</label>${ib('p1','Toggle')}${ib('p2','Select')}${ib('u1','Quick select')}</div>
<h3>General ${ic('dns')}</h3>
<table><tr><th>Color</th><td><div><i class="q"></i>ByLayer</div></td></tr><tr><th class="hl">Layer</th><td><div class="d"><select aria-label="Layer"><option>cobertura</option></select>${ic('dn')}</div></td></tr><tr><th>Linetype</th><td><div><i></i>ByLay...</div></td></tr><tr><th>Linetype...</th><td>1.000</td></tr><tr><th>Lineweight</th><td><div><i></i>ByLay...</div></td></tr><tr><th>Transpar...</th><td>ByLayer</td></tr><tr><th>Thickness</th><td>0.000</td></tr></table>
<h3>3D Visualization ${ic('dns')}</h3><table><tr><th>Material</th><td>ByLayer</td></tr></table>
<h3>Plot style ${ic('dns')}</h3><table><tr><th>Plot style</th><td class="off">ByColor</td></tr><tr><th>Plot style</th><td>None</td></tr></table></div></div>`);

/* Wireframe of the building; model units are thirds of a pixel. */
function wire(){
  const p=(pts,c)=>'M'+pts.map(q=>q.join(' ')).join('L')+(c?'z':'');
  let w='',g='',b='',bt='',r='',y='',dim='';
  const v=(x,a,z)=>{w+=`M${x} ${a}V${z}`};
  const dv=(x,a,z)=>{dim+=`M${x} ${a}V${z}`};
  [[0,0],[368,1],[731,2]].forEach(([o,n])=>{
    w+=p([[45,82+o],[399,60+o],[399,70+o],[50,92+o]])+p([[500,62+o],[500,52+o],[633,43+o],[808,295+o],[770,297+o],[605,57+o],[500,62+o]]);
    w+=p([[45,82+o],[220,330+o],[255,330+o],[88,92+o]])+p([[218,323+o],[253,322+o]])+p([[79,84+o],[168,200+o],[255,322+o]]);
    w+=p([[603,47+o],[770,290+o],[808,289+o]])+p([[639,47+o],[808,289+o]]);
    [45,55,79,88].forEach(x=>v(x,86+o,430+o));
    [133,141,163,169].forEach(x=>v(x,205+o,550+o));
    [325,331,355].forEach(x=>v(x,64+o,415+o));
    [603,608,633,639].forEach(x=>v(x,46+o,392+o));
    [686,693,715,722].forEach(x=>v(x,170+o,515+o));
    [218,227,253].forEach(x=>v(x,325+o,675+o));
    [800,808].forEach(x=>v(x,292+o,640+o));
    [505,523].forEach(x=>v(x,310+o,655+o));
    v(399,60+o,408+o);v(500,52+o,400+o);
    [48,51,82,85].forEach(x=>dv(x,88+o,430+o));
    [358,361].forEach(x=>dv(x,64+o,415+o));
    [690,718].forEach(x=>dv(x,170+o,515+o));
    [413,442].forEach(x=>dv(x,190+o,535+o));
    dv(222,330+o,675+o);dv(804,292+o,640+o);dv(605,46+o,392+o);dv(636,46+o,392+o);dv(137,205+o,550+o);
    w+=p([[686,170+o],[722,167+o],[722,174+o],[686,177+o]],1);
    w+=p([[410,187+o],[443,184+o],[446,192+o],[413,194+o]],1)+p([[410,187+o],[410,530+o],[413,538+o],[446,535+o],[446,192+o]])+p([[413,530+o],[443,528+o]]);
    w+=p([[493,307+o],[526,305+o],[526,315+o],[493,317+o]],1)+p([[493,650+o],[526,649+o],[526,657+o],[493,659+o]],1);
    const k=[0,-52,35][n];
    w+=p([[133,206+o],[350+k,195+o],[350+k,538+o],[133,550+o]])+p([[163,198+o],[325+k,189+o],[325+k,530+o],[163,540+o]]);
    w+=p([[268+k,82+o],[289+k,108+o],[350+k,195+o]])+p([[289+k,108+o],[270+k,108+o]])+p([[289+k,108+o],[289+k,450+o],[270+k,450+o]])+p([[289+k,450+o],[350+k,538+o]])+p([[268+k,455+o],[325+k,532+o]])+p([[268+k,84+o],[325+k,189+o]])+p([[268+k,78+o],[325,74+o]]);
    const yx=[247,195,281][n];
    y+=p([[yx,85+o],[yx+25,108+o],[yx+25,452+o],[yx,432+o]],1)+p([[yx+4,88+o],[yx+4,434+o]])+p([[yx+12,95+o],[yx+12,440+o]])+p([[yx+20,100+o],[yx+20,446+o]]);
    [[260,498,333,318],[532,773,316,299]].forEach(([a,c,t,u])=>{
      b+=p([[a,t+o],[c,u+o],[c,u+339+o],[a,t+339+o]],1);
      bt+=p([[a+3,t+3+o],[c-3,u+3+o],[c-3,u+336+o],[a+3,t+336+o]],1);
    });
  });
  [427,450,793,813,1158,1180].forEach((s,i)=>{
    w+=p([[45,s],[633,s-38],[808,s+213],[220,s+250]],1);
    if(i%2==0)w+=p([[88,s+8],[605,s-24],[770,s+212],[253,s+244]],1)+p([[218,s+256],[253,s+254]]);
    else if(i<5)w+=p([[88,s+4],[255,s+244]])+p([[605,s-26],[772,s+208]])+p([[639,s-34],[808,s+206]]);
  });
  w+=p([[593,155],[670,150],[670,492],[593,498]],1)+'M600 158V498';
  w+=p([[545,487],[648,481],[648,824],[545,830]],1)+'M550 487V830';
  w+=p([[505,887],[667,878],[667,1222],[505,1232]],1);
  [[402,70,107],[450,432,107],[417,800,106]].forEach(([x,t,d])=>r+=p([[x,t],[x+d,t-8],[x+d,t+336],[x,t+343]],1));
  [[619,212,54,93,76,109],[613,406,60,82,75,111],[592,542,56,93,101,148],[586,737,60,82,102,146],[614,940,54,93,81,114],[610,1135,58,81,78,113]].forEach(([x,t,d,h,X,Z])=>{
    const q=[[x,t],[x+d,t-3],[x+d,t+h-3],[x,t+h]],q2=[[x+X,t+Z],[749,t+Z-4],[749,t+Z+h-4],[x+X,t+Z+h]];
    g+=p(q,1)+p(q2,1)+q.map((a,i)=>p([a,q2[i]])).join('');
  });
  const pa=(d,c,sw)=>`<path d="${d}" fill="none" stroke="${c}" stroke-width="${sw}"/>`;
  return `<g transform="translate(405 129) scale(.33333)">${pa(dim,'#969a9e',3)}${pa(w,'#ececec',3.4)}${pa(y,'#ecec00',3)}${pa(r,'#f00000',4.5)}${pa(g,'#00d800',3.6)}${pa(b,'#0000f0',9)}${pa(bt,'#1616e8',3)}</g>`;
}
define('drawing-window',`
:host{flex:1;min-width:0;display:flex;margin:5px 0 0 5px;border:solid #8d8d8d;border-width:1px 0 0 1px;position:relative}
.f{flex:1;min-width:0;display:flex;flex-direction:column;margin:1px 0 0 1px;border:solid #fff;border-width:1px 0 2px 1px;box-shadow:-1px -1px #000}
.b{flex:1;display:flex;flex-direction:column;margin-left:1px;border-left:1px solid #111;background:#b9d1ea}
.o{flex:1;display:flex;flex-direction:column;border-left:1px solid #fff;min-height:0}
h1{display:flex;align-items:center;gap:5px;height:36px;margin:0;padding:8px 0 0 10px;font:inherit;color:#111;background:linear-gradient(#9ab4d2,#a5bcd9 60%,#b9d1ea)}
.cv{flex:1;margin-left:7px;background:#222830;position:relative;min-height:0}
.cv p{margin:0;padding:6px 4px;line-height:20px;color:#fff}
svg{position:absolute;inset:0;width:100%;height:100%}`,
`<div class="f"><div class="b"><div class="o"><h1>${ic('dwg')}T0_prédio.dwg</h1><div class="cv"><p>[−][Custom View][2D Wireframe]</p><svg></svg></div></div></div></div><command-window></command-window>`,(h,s)=>{
  s.querySelector('svg').innerHTML=`<path d="M.5 170V273" stroke="#6a62c8"/><path d="M4 238L71 234" stroke="#e06060" stroke-width="1.3"/><path d="M1 241L8 249" stroke="#4fc860"/><rect x="0" y="235" width="3.500" height="7" fill="#111" stroke="#fff"/>`+wire()+
  `<g fill="#e0e0e0" font-family="Lato, Open Sans, sans-serif" font-weight="300" font-size="22"><text x="483" y="538">Z</text><text x="467" y="576" fill="#8f9397" font-size="18">Y</text><text x="543" y="594">X</text></g>`;
});
define('command-window',`
:host{position:absolute;right:0;top:1px;width:535px;height:225px;opacity:.73;display:flex;z-index:1;font:15px/19px "DejaVu Sans Mono",monospace;color:#000}
.s{width:30px;background:#2c303e;display:flex;flex-direction:column;align-items:center;padding:5px 3px 0 0;flex:none}
.s ac-icon:nth-child(2){margin:8px 0 16px}
.m{flex:1;display:flex;flex-direction:column;margin:0 2px 0 1px;min-width:0}
.l{flex:1;background:#c4c4c4;padding:7px 3px 0;white-space:pre}
.i{display:flex;align-items:center;height:26px;background:#f8f8fa;margin-top:1px;padding-left:4px;gap:3px}
input{flex:1;font-style:italic;font-size:15px;padding-left:6px}
input::placeholder{color:#4a4a4a;opacity:1}`,
`<div class="s">${ic('grid6')}${ic('cx')}${ic('wrench')}</div><div class="m"><div class="l">1 loop extracted.
1 Region created.
1 loop extracted.
1 Region created.
1 loop extracted.
1 Region created.
0
Command:
Command:
Command:</div><div class="i">${ic('cmd')}${ic('dk')}<input aria-label="Command" placeholder="Type a command"></div></div>`);

define('status-bar',`
footer{display:flex;height:30px;gap:3px;padding-left:1px;border-bottom:1px solid #343c49}
div{display:flex;align-items:center;background:#3b4453;flex:none}
.sp{flex:1;margin-right:2px}
button{justify-content:center;height:28px}
.on{background:#5e8dc1}
.j{margin-left:-2px}`,`<footer></footer>`,(h,s)=>{
  const b=(n,w,c='')=>`<button aria-label="${n}" class="${c}" style="width:${w}px">${ic(n)}</button>`;
  s.querySelector('footer').innerHTML=`<div class="sp"></div><div><button style="width:59px">MODEL</button></div>
<div>${b('sgrid',30)}${b('ssnap',29)}${b('dns',21)}</div><div>${b('sdyn',30)}</div>
<div class="j">${b('sortho',31)}${b('spolar',30)}${b('dns',18)}${b('siso',32)}${b('dns',19)}</div>
<div class="j">${b('strk',29)}${b('sosn',32)}${b('dns',19)}</div>
<div>${b('sa1',29,'on')}${b('sa2',31)}${b('sa3',29)}<button style="width:24px">1:1</button>${b('dns',18)}</div>
<div>${b('gear',30)}${b('dns',19)}</div><div>${b('scust',30)}</div><div>${b('sshape',31)}</div><div>${b('sperf',38)}</div><div>${b('sfull',30)}${b('sham',29)}</div>`;
});

define('acad-app',`
:host{display:flex;flex-direction:column;height:100vh;background:#222933}
main{flex:1;min-height:0;display:flex;background:#3b4453;border-top:1px solid #222933;padding-bottom:5px;position:relative}
layer-manager{margin-bottom:-5px}`,
`<title-bar></title-bar><ribbon-tabs></ribbon-tabs><ribbon-bar></ribbon-bar><file-tabs></file-tabs>
<main><layer-manager></layer-manager><drawing-window></drawing-window><properties-palette></properties-palette></main>
<layout-tabs></layout-tabs><status-bar></status-bar>`);
</script>
</body>
</html>
